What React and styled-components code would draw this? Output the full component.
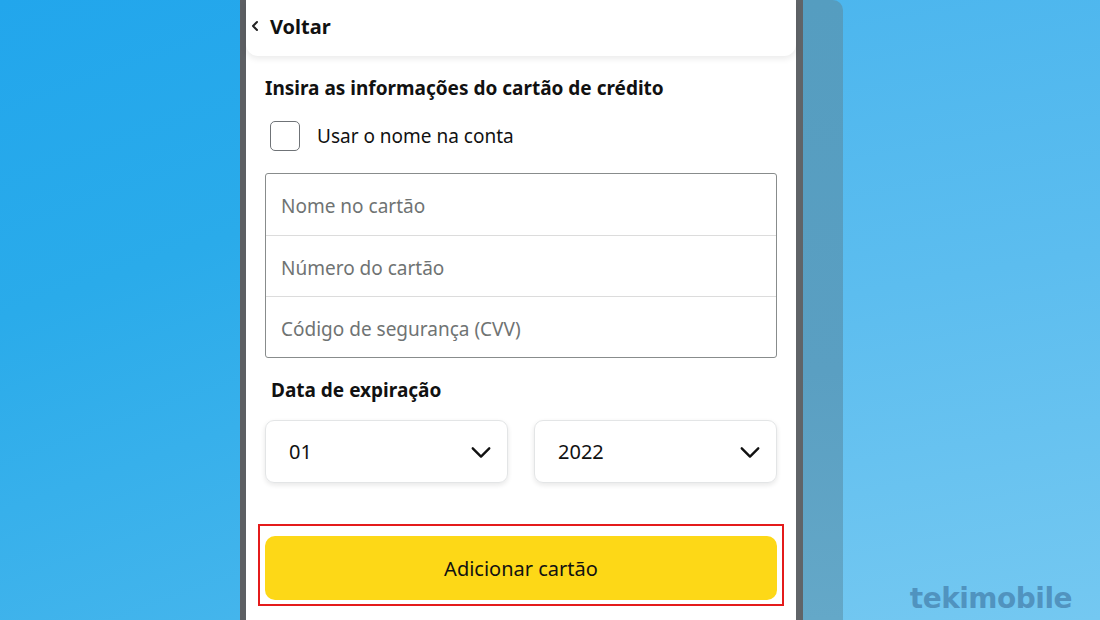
import React from 'react'
import styled, { createGlobalStyle } from 'styled-components'

const GlobalStyle = createGlobalStyle`
  html, body {
    margin: 0;
    padding: 0;
    overflow: hidden;
  }
  body {
    font-family: "Noto Sans", "Open Sans", sans-serif;
  }
`

const Stage = styled.div`
  display: flex;
  width: 1100px;
  height: 620px;
  overflow: hidden;
`

const LeftBg = styled.div`
  flex: 0 0 240px;
  background: linear-gradient(160deg, #22a6ec 0%, #2aabea 45%, #44b5ec 100%);
`

const Phone = styled.div`
  flex: 0 0 550px;
  border-left: 6px solid #5d5f63;
  border-right: 7px solid #606468;
  background: #fff;
  display: flex;
  flex-direction: column;
`

const RightBg = styled.div`
  flex: 1;
  display: flex;
  background: linear-gradient(170deg, #4cb6ee 0%, #5cbdef 45%, #74c8f1 100%);
`

const Shade = styled.div`
  flex: 0 0 40px;
  background: linear-gradient(180deg, #559dc0 0%, #5a9fc2 60%, #64a8c8 100%);
  border-radius: 0 10px 0 0;
`

const Watermark = styled.div`
  flex: 1;
  display: flex;
  align-items: flex-end;
  justify-content: flex-end;
  padding: 0 28px 5px 0;
  font-family: "DejaVu Sans", sans-serif;
  font-weight: 700;
  font-size: 28px;
  letter-spacing: -0.5px;
  color: rgba(70, 130, 175, 0.75);
`

const Header = styled.div`
  height: 56px;
  box-sizing: border-box;
  display: flex;
  align-items: center;
  gap: 10px;
  padding: 0 0 4px 4px;
  background: #fff;
  border-radius: 0 0 12px 12px;
  box-shadow: 0 3px 6px rgba(0, 0, 0, 0.08);
`

const HeaderTitle = styled.span`
  font-size: 20px;
  font-weight: 700;
  color: #111;
`

const Body = styled.div`
  display: flex;
  flex-direction: column;
  padding: 16px 19px 0;
`

const Title = styled.h2`
  margin: 0;
  font-size: 19px;
  font-weight: 700;
  color: #111;
  line-height: 32px;
`

const CheckRow = styled.label`
  display: flex;
  align-items: center;
  gap: 17px;
  margin: 17px 0 0 5px;
  font-size: 19px;
  color: #111;
`

const Box = styled.span`
  width: 30px;
  height: 30px;
  box-sizing: border-box;
  border: 1.5px solid #6f7377;
  border-radius: 5px;
  background: #fff;
`

const Fields = styled.div`
  margin-top: 22px;
  border: 1px solid #888c8c;
  border-radius: 3px;
  display: flex;
  flex-direction: column;
`

const Field = styled.div`
  height: 61px;
  display: flex;
  align-items: center;
  padding: 3px 0 0 15px;
  box-sizing: border-box;
  font-size: 19px;
  color: #6f7373;
  & + & {
    border-top: 1px solid #dcdcdc;
  }
`

const SubTitle = styled.h3`
  margin: 18px 0 0 6px;
  font-size: 19px;
  font-weight: 700;
  color: #111;
  line-height: 28px;
`

const SelectRow = styled.div`
  display: grid;
  grid-template-columns: 1fr 1fr;
  gap: 26px;
  margin-top: 16px;
`

const Select = styled.div`
  height: 63px;
  box-sizing: border-box;
  display: flex;
  align-items: center;
  justify-content: space-between;
  padding: 0 15px 0 23px;
  border: 1px solid #e3e5e6;
  border-radius: 9px;
  box-shadow: 0 2px 5px rgba(15, 17, 17, 0.1);
  font-size: 20px;
  color: #111;
`

const Highlight = styled.div`
  margin: 41px -7px 0;
  padding: 10px 5px 4px;
  border: 2px solid #e41b1b;
`

const Button = styled.button`
  width: 100%;
  height: 64px;
  border: none;
  border-radius: 10px;
  background: #fdd817;
  font-family: inherit;
  font-size: 20px;
  color: #111;
`

const Chevron = ({ size = 14, weight = 2.6 }) => (
  <svg width={size} height={size} viewBox="0 0 24 24" fill="none" stroke="#111" strokeWidth={weight} strokeLinecap="round" strokeLinejoin="round">
    <path d="M3 8l9 9 9-9" />
  </svg>
)

const BackArrow = () => (
  <svg width="10" height="12" viewBox="0 0 10 12" fill="none" stroke="#222" strokeWidth="2" strokeLinecap="round" strokeLinejoin="round">
    <path d="M7 2L3 6l4 4" />
  </svg>
)

const App = () => (
  <Stage>
    <GlobalStyle />
    <LeftBg />
    <Phone>
      <Header>
        <BackArrow />
        <HeaderTitle>Voltar</HeaderTitle>
      </Header>
      <Body>
        <Title>Insira as informações do cartão de crédito</Title>
        <CheckRow>
          <Box />
          Usar o nome na conta
        </CheckRow>
        <Fields>
          <Field>Nome no cartão</Field>
          <Field>Número do cartão</Field>
          <Field>Código de segurança (CVV)</Field>
        </Fields>
        <SubTitle>Data de expiração</SubTitle>
        <SelectRow>
          <Select>01<Chevron size={22} /></Select>
          <Select>2022<Chevron size={22} /></Select>
        </SelectRow>
        <Highlight>
          <Button>Adicionar cartão</Button>
        </Highlight>
      </Body>
    </Phone>
    <RightBg>
      <Shade />
      <Watermark>tekimobile</Watermark>
    </RightBg>
  </Stage>
)

export default App
